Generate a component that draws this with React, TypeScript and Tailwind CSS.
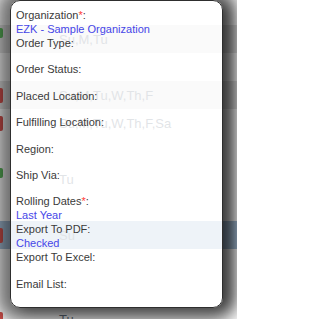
const rows = [
  { text: "", icon: "" },
  { text: "Su,M,Tu", icon: "green", stripe: true },
  { text: "", icon: "" },
  { text: "Su,M,Tu,W,Th,F", icon: "red", stripe: true },
  { text: "Su,M,Tu,W,Th,F,Sa", icon: "red" },
  { text: "", icon: "" },
  { text: "Tu", icon: "green" },
  { text: "", icon: "" },
  { text: "Su", icon: "red", selected: true },
  { text: "", icon: "" },
  { text: "", icon: "" },
  { text: "Tu", icon: "red" },
];

const fields = [
  { label: "Organization", required: true, value: "EZK - Sample Organization" },
  { label: "Order Type" },
  { label: "Order Status" },
  { label: "Placed Location" },
  { label: "Fulfilling Location" },
  { label: "Region" },
  { label: "Ship Via" },
  { label: "Rolling Dates", required: true, value: "Last Year" },
  { label: "Export To PDF", value: "Checked" },
  { label: "Export To Excel" },
  { label: "Email List" },
];

function Icon({ kind }: { kind: string }) {
  if (kind === "green") {
    return <span className="ml-[-9px] w-[12px] h-[10px] self-start mt-[3px] rounded-[2px] bg-[#5cb85c]" />;
  }
  if (kind === "red") {
    return <span className="ml-[-9px] w-[12px] h-[15px] rounded-[2px] bg-[#d9534f]" />;
  }
  return <span className="ml-[-9px] w-[12px]" />;
}

export default function App() {
  return (
    <div className="relative w-[237px] h-[319px] overflow-hidden bg-white font-['Liberation_Sans',Arial,sans-serif]">
      {/* table behind the popover */}
      <div className="flex flex-col mt-[-3px]">
        {rows.map((r, i) => (
          <div
            key={i}
            className={`flex items-center h-[28px] ${
              r.selected ? "bg-[#a9c2db]" : r.stripe ? "bg-[#e4e4e4]" : "bg-white"
            }`}
          >
            <Icon kind={r.icon} />
            <span className="ml-[56px] text-[13px] leading-none text-[#6a7686]">{r.text}</span>
          </div>
        ))}
      </div>

      {/* popover */}
      <div className="absolute left-[10px] top-0 w-[213px] h-[308px] rounded-[10px] border border-[#2e2e2e] bg-white/80 pt-[7px] pl-[5px] shadow-[0_0_18px_14px_rgba(0,0,0,0.55),8px_2px_14px_rgba(0,0,0,0.5)]">
        {fields.map((f) => (
          <div key={f.label} className="text-[11px]">
            <div className="leading-[14px] text-[#3a3a3a]">
              {f.label}
              {f.required && <span className="text-[#ff3b3b]">*</span>}:
            </div>
            <div className="min-h-[12.4px] leading-[14px] text-[#4646e8]">{f.value}</div>
          </div>
        ))}
      </div>
    </div>
  );
}
